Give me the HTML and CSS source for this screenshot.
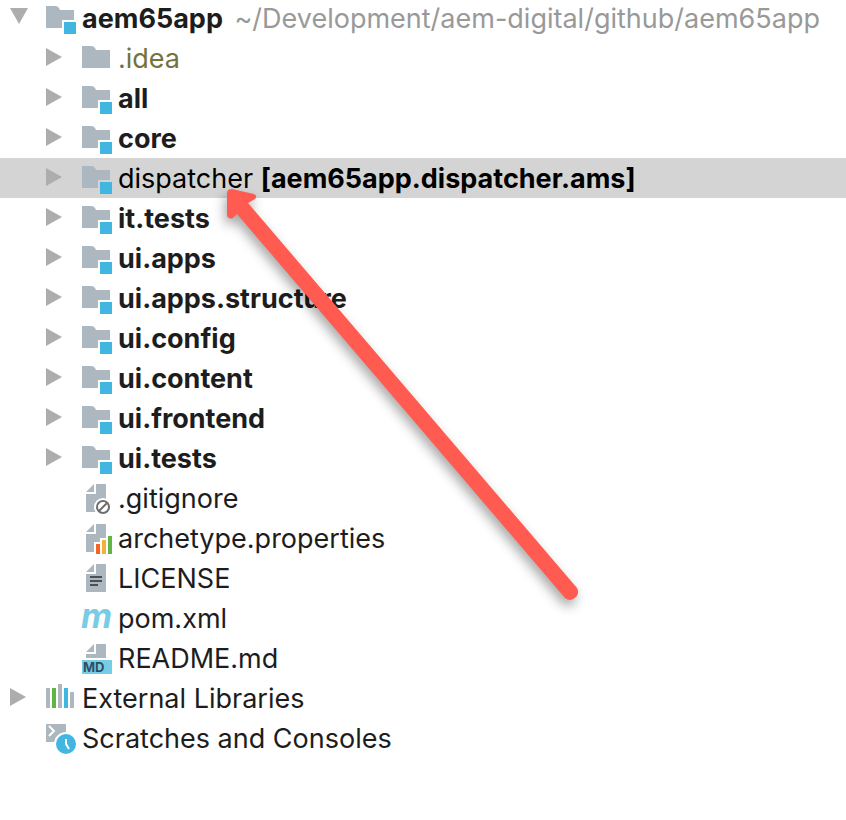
FILE: index.html
```
<!DOCTYPE html>
<html lang="en">
<head>
  <meta charset="UTF-8">
  <meta name="viewport" content="width=device-width, initial-scale=1.0">
  <title>aem65app</title>
  <link rel="stylesheet" href="styles.css">
</head>
<body>
  <!-- Shared icons -->
  <svg class="sprite" aria-hidden="true">
    <symbol id="right" viewBox="0 0 18 20"><path d="M0 0L16 9L0 18Z" fill="#adadad"/></symbol>
    <symbol id="down" viewBox="0 0 18 20"><path d="M0 0H18L9 16Z" fill="#adadad"/></symbol>
    <symbol id="folder" viewBox="0 0 30 32">
      <path d="M0 4H9Q12 4 13 6L14 8H28V26H0Z" fill="#adb7c0"/>
    </symbol>
    <symbol id="module" viewBox="0 0 30 32">
      <path d="M0 4H9Q12 4 13 6L14 8H28V18H16V26H0Z" fill="#adb7c0"/>
      <path d="M18 20H30V32H18Z" fill="#40b6e0"/>
    </symbol>
    <symbol id="doc" viewBox="0 0 30 32">
      <path d="M4 10L12 2V10Z" fill="#adb7c0"/>
      <path d="M14 2H24V30H4V12H14Z" fill="#adb7c0"/>
    </symbol>
  </svg>

  <main class="project">
    <ul class="tree">
      <li class="row">
        <button class="toggle" aria-label="Collapse aem65app"><svg><use href="#down"/></svg></button>
        <svg class="icon"><use href="#module"/></svg>
        <span class="name"><b>aem65app</b> <span class="path">~/Development/aem-digital/github/aem65app</span></span>
      </li>
      <li class="row child">
        <button class="toggle" aria-label="Expand .idea"><svg><use href="#right"/></svg></button>
        <svg class="icon"><use href="#folder"/></svg>
        <span class="name ignored">.idea</span>
      </li>
      <li class="row child">
        <button class="toggle" aria-label="Expand all"><svg><use href="#right"/></svg></button>
        <svg class="icon"><use href="#module"/></svg>
        <b class="name">all</b>
      </li>
      <li class="row child">
        <button class="toggle" aria-label="Expand core"><svg><use href="#right"/></svg></button>
        <svg class="icon"><use href="#module"/></svg>
        <b class="name">core</b>
      </li>
      <li class="row child selected">
        <button class="toggle" aria-label="Expand dispatcher"><svg><use href="#right"/></svg></button>
        <svg class="icon"><use href="#module"/></svg>
        <span class="name">dispatcher <b>[aem65app.dispatcher.ams]</b></span>
      </li>
      <li class="row child">
        <button class="toggle" aria-label="Expand it.tests"><svg><use href="#right"/></svg></button>
        <svg class="icon"><use href="#module"/></svg>
        <b class="name">it.tests</b>
      </li>
      <li class="row child">
        <button class="toggle" aria-label="Expand ui.apps"><svg><use href="#right"/></svg></button>
        <svg class="icon"><use href="#module"/></svg>
        <b class="name">ui.apps</b>
      </li>
      <li class="row child">
        <button class="toggle" aria-label="Expand ui.apps.structure"><svg><use href="#right"/></svg></button>
        <svg class="icon"><use href="#module"/></svg>
        <b class="name">ui.apps.structure</b>
      </li>
      <li class="row child">
        <button class="toggle" aria-label="Expand ui.config"><svg><use href="#right"/></svg></button>
        <svg class="icon"><use href="#module"/></svg>
        <b class="name">ui.config</b>
      </li>
      <li class="row child">
        <button class="toggle" aria-label="Expand ui.content"><svg><use href="#right"/></svg></button>
        <svg class="icon"><use href="#module"/></svg>
        <b class="name">ui.content</b>
      </li>
      <li class="row child">
        <button class="toggle" aria-label="Expand ui.frontend"><svg><use href="#right"/></svg></button>
        <svg class="icon"><use href="#module"/></svg>
        <b class="name">ui.frontend</b>
      </li>
      <li class="row child">
        <button class="toggle" aria-label="Expand ui.tests"><svg><use href="#right"/></svg></button>
        <svg class="icon"><use href="#module"/></svg>
        <b class="name">ui.tests</b>
      </li>
      <li class="row child file">
        <svg class="icon" viewBox="0 0 30 32">
          <use href="#doc"/>
          <circle cx="21" cy="25" r="9" fill="#fff"/>
          <circle cx="21" cy="25" r="6" fill="none" stroke="#6e6e6e" stroke-width="2"/>
          <path d="M17 29L25 21" stroke="#6e6e6e" stroke-width="2"/>
        </svg>
        <span class="name">.gitignore</span>
      </li>
      <li class="row child file">
        <svg class="icon" viewBox="0 0 30 32">
          <use href="#doc"/>
          <path d="M12 32V20H18V16H24V12H30V32Z" fill="#fff"/>
          <path d="M14 22H18V32H14Z" fill="#f26522"/>
          <path d="M20 18H24V32H20Z" fill="#f4af3d"/>
          <path d="M26 14H30V32H26Z" fill="#62b543"/>
        </svg>
        <span class="name">archetype.properties</span>
      </li>
      <li class="row child file">
        <svg class="icon" viewBox="0 0 30 32">
          <use href="#doc"/>
          <path d="M8 15H20M8 19H20M8 23H16" stroke="#4a5056" stroke-width="2"/>
        </svg>
        <span class="name">LICENSE</span>
      </li>
      <li class="row child file">
        <svg class="icon" viewBox="0 0 30 32"><text class="maven" x="-1" y="26">m</text></svg>
        <span class="name">pom.xml</span>
      </li>
      <li class="row child file">
        <svg class="icon" viewBox="0 0 30 32">
          <path d="M4 10L12 2V10Z" fill="#adb7c0"/>
          <path d="M14 2H24V16H4V12H14Z" fill="#adb7c0"/>
          <path d="M0 18H30V32H0Z" fill="#78cde6"/>
          <text class="md" x="1" y="30">MD</text>
        </svg>
        <span class="name">README.md</span>
      </li>
      <li class="row">
        <button class="toggle" aria-label="Expand External Libraries"><svg><use href="#right"/></svg></button>
        <svg class="icon" viewBox="0 0 30 32">
          <path d="M0 6H4V26H0ZM12 2H16V26H12ZM24 10H28V26H24Z" fill="#adb7c0"/>
          <path d="M6 6H10V26H6Z" fill="#62b543"/>
          <path d="M18 6H22V26H18Z" fill="#40b6e0"/>
        </svg>
        <span class="name">External Libraries</span>
      </li>
      <li class="row file">
        <svg class="icon" viewBox="0 0 30 32">
          <path d="M0 2H20V20H0Z" fill="#adb7c0"/>
          <path d="M3 4L8 9L3 14" fill="none" stroke="#fff" stroke-width="2"/>
          <circle cx="20" cy="22" r="12" fill="#fff"/>
          <circle cx="20" cy="22" r="10" fill="#40b6e0"/>
          <path d="M20 17V22L23 27" fill="none" stroke="#fff" stroke-width="2"/>
        </svg>
        <span class="name">Scratches and Consoles</span>
      </li>
    </ul>

    <!-- Arrow pointing at the dispatcher module -->
    <svg class="arrow" viewBox="0 0 380 440" aria-hidden="true">
      <path d="M19 17Q19 13 24 13L46 18Q50 20 47 23L40 27L369 412A8 8 0 0 1 357 422L29 38L25 42Q20 44 19 39Z" fill="#ff5b50"/>
    </svg>
  </main>
</body>
</html>
```

FILE: styles.css
```
body {
  margin: 0;
  background-color: #fff;
  font-family: Inter, "Liberation Sans", sans-serif;
  font-size: 27px;
  line-height: 38px;
  color: #1d1d1d;
}

.sprite {
  display: none;
}

.project {
  position: relative;
  overflow: hidden;
}

.tree {
  list-style: none;
  margin: -2px 0 0;
  padding: 0;
}

.row {
  display: flex;
  align-items: center;
  height: 40px;
  padding-left: 10px;
  white-space: nowrap;
}

.row.child {
  padding-left: 46px;
}

.row.file {
  padding-left: 46px;
}

.row.child.file {
  padding-left: 82px;
}

.row.selected {
  background-color: #d4d4d4;
  color: #000;
}

.toggle {
  display: flex;
  width: 36px;
  padding: 0;
  border: none;
  background: none;
  cursor: pointer;
}

.toggle svg {
  width: 18px;
  height: 20px;
}

.icon {
  flex: none;
  width: 30px;
  height: 32px;
  margin-right: 6px;
  overflow: visible;
}

.name {
  padding-top: 2px;
}

.name b,
b.name {
  font-weight: 700;
}

.path {
  margin-left: 4px;
  color: #999;
}

.ignored {
  color: #73733d;
}

.maven {
  font: italic 700 34px Inter, sans-serif;
  fill: #78cde6;
}

.md {
  font: 700 13px Inter, sans-serif;
  fill: #314f5e;
}

.arrow {
  position: absolute;
  top: 176px;
  left: 208px;
  width: 380px;
  height: 440px;
  pointer-events: none;
  overflow: visible;
  filter: drop-shadow(-2px 6px 6px rgba(0, 0, 0, 0.35));
}
```
